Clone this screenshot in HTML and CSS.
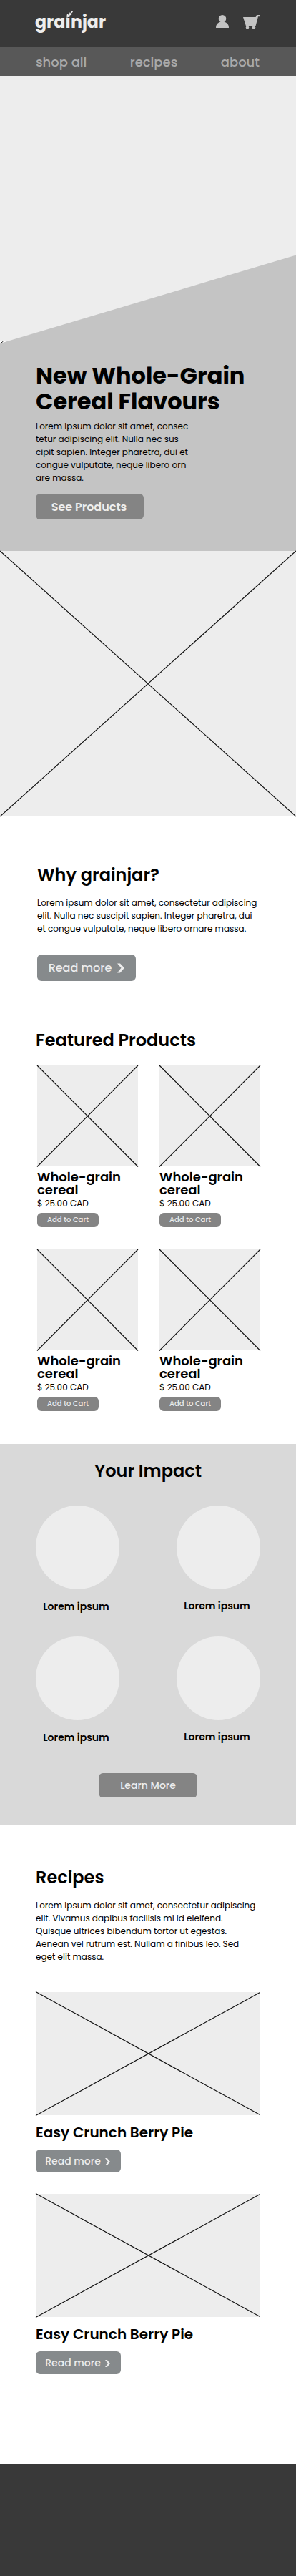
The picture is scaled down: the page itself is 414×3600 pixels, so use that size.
FILE: index.html
```html
<!DOCTYPE html>
<html lang="en">
<head>
<meta charset="utf-8">
<meta name="viewport" content="width=device-width">
<title>grainjar</title>
<link rel="stylesheet" href="styles.css">
</head>
<body>
<header class="top">
  <a class="logo">graınjar
    <svg class="leaf" viewBox="0 0 10 11" width="10" height="11"><path d="M.6 10.500Q0 7 1 4.500 2 4.500 2.600 6 2.500 4 4.300 2.300 5 3 4.800 4 6 1 9.300 0 9 2.800 6.500 4 7.500 4.100 8 4.500 6.700 6.700 4.200 6.600 5.200 7 5.300 7.700 3.700 9.200 1.800 8.800L1 10.600Z"/></svg>
  </a>
  <div class="tools">
    <svg width="18" height="18" viewBox="0 0 18 18"><circle cx="9" cy="5.300" r="5.300"/><path d="M0 18C0 12.500 3.500 9.500 9 9.500S18 12.500 18 18Z"/></svg>
    <svg width="24" height="20" viewBox="0 0 24 20"><path d="M0 3H17.600L19 0H24L23.600 2.200H21L17.500 15.500H4Z"/><circle cx="6" cy="17.500" r="2.200"/><circle cx="15" cy="17.500" r="2.200"/></svg>
  </div>
</header>
<nav class="nav"><a>shop all</a><a>recipes</a><a>about</a></nav>
<section class="hero">
  <svg class="slope" width="414" height="374" viewBox="0 0 414 374"><path class="paper" d="M0 371H12L0 374Z"/><path class="shade" d="M414 250.500V374H0Z"/><path class="line" d="M0 374.500L4.500 371"/></svg>
  <div class="hero-body">
    <h1>New Whole-Grain<br>Cereal Flavours</h1>
    <p class="copy">Lorem ipsum dolor sit amet, consec<br>tetur adipiscing elit. Nulla nec sus<br>cipit sapien. Integer pharetra, dui et<br>congue vulputate, neque libero orn<br>are massa.</p>
    <a class="btn see">See Products</a>
  </div>
</section>
<svg class="ph" width="414" height="371" viewBox="0 0 414 371"><path d="M0 0L414 371M414 0L0 371"/></svg>
<section class="why">
  <h2>Why grainjar?</h2>
  <p class="copy">Lorem ipsum dolor sit amet, consectetur adipiscing<br>elit. Nulla nec suscipit sapien. Integer pharetra, dui<br>et congue vulputate, neque libero ornare massa.</p>
  <a class="btn more big"><span>Read more</span><svg width="10" height="14" viewBox="0 0 10 14"><path d="M0 0.500H4L10 6.800 4 13.500H0L5.500 6.800Z"/></svg></a>
</section>
<section class="featured">
  <h2>Featured Products</h2>
  <div class="grid">
    <article><svg class="ph" width="141" height="141" viewBox="0 0 141 141"><path d="M0 0L141 141.500M141 0L0 141.500"/></svg><h3>Whole-grain<br>cereal</h3><p class="price">$ 25.00 CAD</p><a class="btn add">Add to Cart</a></article>
    <article><svg class="ph" width="141" height="141" viewBox="0 0 141 141"><path d="M0 0L141 141.500M141 0L0 141.500"/></svg><h3>Whole-grain<br>cereal</h3><p class="price">$ 25.00 CAD</p><a class="btn add">Add to Cart</a></article>
    <article><svg class="ph" width="141" height="141" viewBox="0 0 141 141"><path d="M0 0L141 141.500M141 0L0 141.500"/></svg><h3>Whole-grain<br>cereal</h3><p class="price">$ 25.00 CAD</p><a class="btn add">Add to Cart</a></article>
    <article><svg class="ph" width="141" height="141" viewBox="0 0 141 141"><path d="M0 0L141 141.500M141 0L0 141.500"/></svg><h3>Whole-grain<br>cereal</h3><p class="price">$ 25.00 CAD</p><a class="btn add">Add to Cart</a></article>
  </div>
</section>
<section class="impact">
  <h2>Your Impact</h2>
  <div class="circles">
    <figure><div class="disc"></div><figcaption>Lorem ipsum</figcaption></figure>
    <figure class="alt"><div class="disc"></div><figcaption>Lorem ipsum</figcaption></figure>
    <figure><div class="disc"></div><figcaption>Lorem ipsum</figcaption></figure>
    <figure class="alt"><div class="disc"></div><figcaption>Lorem ipsum</figcaption></figure>
  </div>
  <a class="btn learn">Learn More</a>
</section>
<section class="recipes">
  <h2>Recipes</h2>
  <p class="copy">Lorem ipsum dolor sit amet, consectetur adipiscing<br>elit. Vivamus dapibus facilisis mi id eleifend.<br>Quisque ultrices bibendum tortor ut egestas.<br>Aenean vel rutrum est. Nullam a finibus leo. Sed<br>eget elit massa.</p>
  <article><svg class="ph" width="313" height="172" viewBox="0 0 313 172"><path d="M0 -.5L313.500 171.500M313.500 .5L0 172.500"/></svg><h3>Easy Crunch Berry Pie</h3><a class="btn more"><span>Read more</span><svg width="7" height="10" viewBox="0 0 7 10"><path d="M0 0H2.800L7 5 2.800 10H0L4 5Z"/></svg></a></article>
  <article><svg class="ph" width="313" height="172" viewBox="0 0 313 172"><path d="M0 -.5L313.500 171.500M313.500 .5L0 172.500"/></svg><h3>Easy Crunch Berry Pie</h3><a class="btn more"><span>Read more</span><svg width="7" height="10" viewBox="0 0 7 10"><path d="M0 0H2.800L7 5 2.800 10H0L4 5Z"/></svg></a></article>
</section>
<footer class="foot"></footer>
</body>
</html>
```
FILE: styles.css
```css
* { box-sizing: border-box; margin: 0; }
body { width: 414px; background: #fff; color: #000; font-family: Poppins, Inter, "Liberation Sans", sans-serif; white-space: nowrap; }
svg { display: block; flex: none; }
h1, h2, h3 { font-weight: 600; }

.top { height: 66px; background: #393939; display: flex; justify-content: space-between; padding: 0 50px; }
.logo { position: relative; color: #ededed; font-size: 23.700px; font-weight: 700; line-height: 30px; padding-top: 16px; margin-left: -1px; }
.leaf { position: absolute; left: 44px; top: 15px; fill: #ededed; }
.tools { display: flex; gap: 20px; padding-top: 21px; fill: #c4c4c4; }
.nav { height: 40px; background: #585858; color: #aaa; display: flex; justify-content: space-between; padding: 0 51px 0 50px; font-size: 18px; font-weight: 500; line-height: 41px; }

.hero { height: 664px; background: #c4c4c4; }
.slope { background: #ededed; }
.paper { fill: #fff; }
.shade { fill: #c4c4c4; }
.line { stroke: #222; fill: none; }
.hero-body { padding: 27px 50px 0; }
h1 { font-size: 32px; font-weight: 700; line-height: 36px; }
.copy { font-size: 12px; line-height: 18px; }
.hero .copy { margin-top: 8px; }
.btn { display: flex; align-items: center; justify-content: center; background: #848484; color: #ededed; border-radius: 6px; font-weight: 500; }
.see { width: 151px; height: 36px; margin-top: 13px; padding-right: 2px; font-size: 16px; font-weight: 600; }

.ph { background: #ededed; overflow: visible; }
.ph path { stroke: #111; stroke-width: 1.150; fill: none; }

.why { padding: 64px 52px 0; height: 269px; }
h2 { font-size: 24px; line-height: 36px; }
.why .copy { margin-top: 12px; }
.more { width: 119px; height: 32px; padding-right: 2px; background: #868a8c; font-size: 14px; gap: 6px; }
.more svg { fill: #ededed; position: relative; top: 1px; }
.big { width: 138px; height: 37px; padding-right: 0; margin-top: 27px; font-size: 16px; gap: 8px; }
.big svg { top: 0; }

.featured { padding: 26px 50px 0; height: 608px; }
.grid { display: grid; grid-template-columns: 141px 141px; grid-auto-rows: 226px; column-gap: 30px; row-gap: 31px; padding: 17px 0 0 2px; }
.grid h3 { font-size: 18px; line-height: 18px; margin-top: 6px; }
.price { font-size: 12px; line-height: 18px; margin-top: 1px; }
.add { width: 86px; height: 20px; font-size: 10px; margin-top: 4px; }

.impact { height: 532px; background: #d9d9d9; padding-top: 20px; }
.impact h2 { text-align: center; }
.circles { display: grid; grid-template-columns: 117px 117px; column-gap: 80px; grid-auto-rows: 183px; padding: 30px 50px 0; }
.disc { width: 117px; height: 117px; border-radius: 50%; background: #ededed; }
figcaption { font-size: 14px; font-weight: 600; line-height: 20px; padding: 14px 4px 0 0; text-align: center; }
.alt figcaption { padding-top: 13px; }
.learn { width: 138px; height: 34px; margin: 8px auto 0; font-size: 14px; }

.recipes { height: 894px; padding: 56px 50px 0; }
.recipes .copy { margin: 12px 0 40px; }
.recipes article { height: 282px; }
.recipes h3 { font-size: 20px; line-height: 30px; margin: 9px 0; }
.foot { height: 156px; background: #393939; }
```
